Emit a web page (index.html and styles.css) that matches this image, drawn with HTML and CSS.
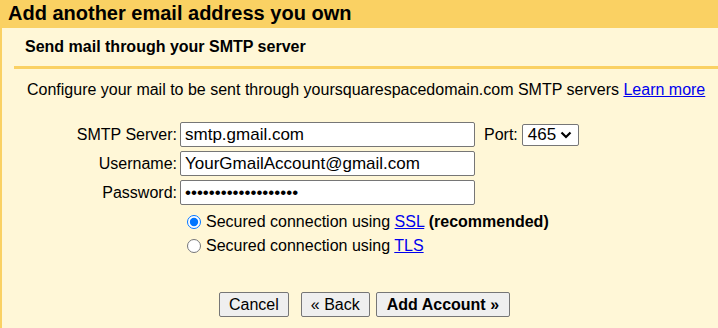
FILE: index.html
```html
<!DOCTYPE html>
<html lang="en">
<head>
    <meta charset="UTF-8">
    <meta name="viewport" content="width=device-width, initial-scale=1.0">
    <title>Add another email address you own</title>
    <link rel="stylesheet" href="styles.css">
</head>
<body>
    <h1 class="title">Add another email address you own</h1>
    <div class="panel">
        <h2 class="subtitle">Send mail through your SMTP server</h2>
        <div class="divider"></div>
        <p class="intro">Configure your mail to be sent through yoursquarespacedomain.com SMTP servers <a href="#">Learn more</a></p>
        <div class="form">
            <label class="label" for="server">SMTP Server:</label>
            <div class="field-row">
                <input class="text" type="text" id="server" value="smtp.gmail.com">
                <label class="port-label" for="port">Port:</label>
                <div class="select" id="port">
                    <span>465</span>
                    <svg width="12" height="8" viewBox="0 0 12 8"><path d="M1.5 1.5 L6 6 L10.5 1.5" fill="none" stroke="#000" stroke-width="2.2"/></svg>
                </div>
            </div>
            <label class="label" for="username">Username:</label>
            <div class="field-row">
                <input class="text" type="text" id="username" value="YourGmailAccount@gmail.com">
            </div>
            <label class="label" for="password">Password:</label>
            <div class="field-row">
                <input class="text" type="password" id="password" value="abcdefghijklmnopqrs">
            </div>
        </div>
        <div class="radios">
            <label class="radio"><input type="radio" name="sec" checked><span>Secured connection using <a href="#">SSL</a> <b>(recommended)</b></span></label>
            <label class="radio"><input type="radio" name="sec"><span>Secured connection using <a href="#">TLS</a></span></label>
        </div>
        <div class="buttons">
            <button class="btn">Cancel</button>
            <button class="btn back">&laquo; Back</button>
            <button class="btn primary">Add Account &raquo;</button>
        </div>
    </div>
</body>
</html>
```

FILE: styles.css
```css
html, body {
    height: 100%;
}
body {
    margin: 0;
    font-family: Arial, "Liberation Sans", sans-serif;
    font-size: 16px;
    color: #000;
    background-color: #fff7d7;
    display: flex;
    flex-direction: column;
}
.title {
    margin: 0;
    height: 28px;
    line-height: 26px;
    padding-left: 8px;
    font-size: 20px;
    font-weight: bold;
    background-color: #fad163;
}
.panel {
    flex: 1;
    border-left: 2px solid #fad163;
}
.subtitle {
    margin: 0;
    height: 38px;
    line-height: 37px;
    padding-left: 23px;
    font-size: 16px;
    font-weight: bold;
}
.divider {
    margin-left: 12px;
    height: 3px;
    background-color: #fad163;
}
.intro {
    margin: 11px 0 0 25px;
    line-height: 19px;
}
a {
    color: #0000ee;
}
.form {
    margin-top: 23px;
    display: grid;
    grid-template-columns: 175px auto;
    row-gap: 4px;
    column-gap: 3px;
    align-items: center;
}
.label {
    text-align: right;
}
.field-row {
    display: flex;
    align-items: center;
}
.text {
    box-sizing: border-box;
    width: 295px;
    height: 25px;
    padding: 0 4px;
    margin: 0;
    border: 1px solid #767676;
    border-radius: 2px;
    background: #fff;
    font-family: Arial, "Liberation Sans", sans-serif;
    font-size: 17px;
}
.port-label {
    margin-left: 9px;
}
.select {
    box-sizing: border-box;
    margin-left: 4px;
    width: 57px;
    height: 22px;
    border: 1px solid #767676;
    border-radius: 2px;
    background: #fff;
    display: flex;
    align-items: center;
    justify-content: space-between;
    padding: 0 6px 0 5px;
    font-size: 17px;
}
.radios {
    margin: 7px 0 0 182px;
    display: flex;
    flex-direction: column;
    row-gap: 5px;
}
.radio {
    display: flex;
    align-items: center;
    line-height: 19px;
}
.radio input {
    margin: 0 5px 0 3px;
    width: 14px;
    height: 14px;
}
.buttons {
    margin: 37px 0 0 217px;
    display: flex;
}
.btn {
    box-sizing: border-box;
    height: 25px;
    padding: 0 9px;
    margin: 0;
    border: 1px solid #767676;
    border-radius: 2px;
    background-color: #efefef;
    font-family: Arial, "Liberation Sans", sans-serif;
    font-size: 16px;
    color: #000;
}
.back {
    margin-left: 12px;
}
.primary {
    margin-left: 6px;
    padding: 0 10px;
    font-weight: bold;
}
```
